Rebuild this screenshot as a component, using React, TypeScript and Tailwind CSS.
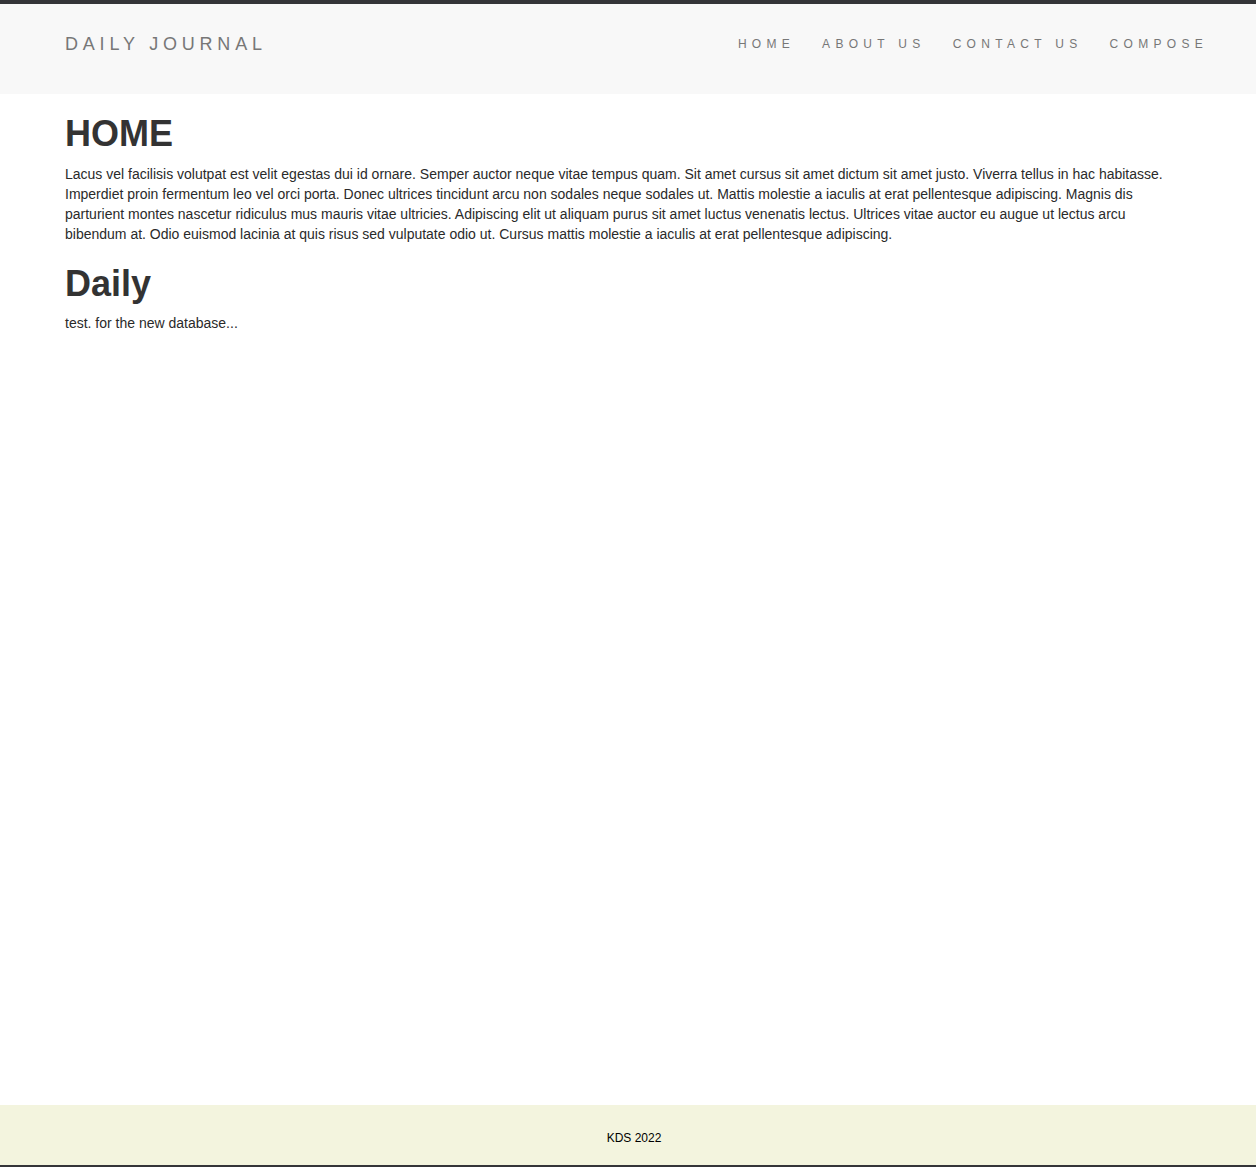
const navLinks = ["HOME", "ABOUT US", "CONTACT US", "COMPOSE"]

const posts = [
  {
    title: "Daily",
    body: "test. for the new database...",
  },
]

const homeText =
  "Lacus vel facilisis volutpat est velit egestas dui id ornare. Semper auctor neque vitae tempus quam. Sit amet cursus sit amet dictum sit amet justo. Viverra tellus in hac habitasse. Imperdiet proin fermentum leo vel orci porta. Donec ultrices tincidunt arcu non sodales neque sodales ut. Mattis molestie a iaculis at erat pellentesque adipiscing. Magnis dis parturient montes nascetur ridiculus mus mauris vitae ultricies. Adipiscing elit ut aliquam purus sit amet luctus venenatis lectus. Ultrices vitae auctor eu augue ut lectus arcu bibendum at. Odio euismod lacinia at quis risus sed vulputate odio ut. Cursus mattis molestie a iaculis at erat pellentesque adipiscing."

const App = () => {
  return (
    <div className="min-h-[1167px] flex flex-col bg-white text-[#333] font-['Liberation_Sans',Arial,sans-serif]">
      {/* navbar */}
      <header className="border-t-4 border-[#343538] bg-[#f8f8f8] h-[94px] pt-[30px] pl-[65px] pr-[48px]">
        <div className="flex items-center justify-between h-5">
          <a className="text-[18px] leading-5 tracking-[4.8px] text-[#777]">DAILY JOURNAL</a>
          <nav className="flex items-center gap-[27px]">
            {navLinks.map((link) => (
              <a key={link} className="text-[12px] leading-5 tracking-[5.3px] text-[#777]">
                {link}
              </a>
            ))}
          </nav>
        </div>
      </header>

      {/* content */}
      <main className="flex-1 px-[65px]">
        <div className="max-w-[1110px]">
          <h1 className="mt-5 mb-2.5 text-[36px] leading-[1.1] font-bold text-[#333]">HOME</h1>
          <p className="mb-2.5 text-[14px] leading-5 text-[#2a2a2a]">{homeText}</p>
          {posts.map((post) => (
            <div key={post.title}>
              <h1 className="mt-5 mb-2.5 text-[36px] leading-[1.1] font-bold text-[#333]">{post.title}</h1>
              <p className="mb-2.5 text-[14px] leading-5 text-[#2a2a2a]">{post.body}</p>
            </div>
          ))}
        </div>
      </main>

      {/* footer */}
      <footer className="h-[62px] bg-[#f3f4de] border-b-2 border-[#343538] flex items-center justify-center pt-[5px]">
        <p className="text-[12px] text-black pl-[12px]">KDS 2022</p>
      </footer>
    </div>
  )
}

export default App
